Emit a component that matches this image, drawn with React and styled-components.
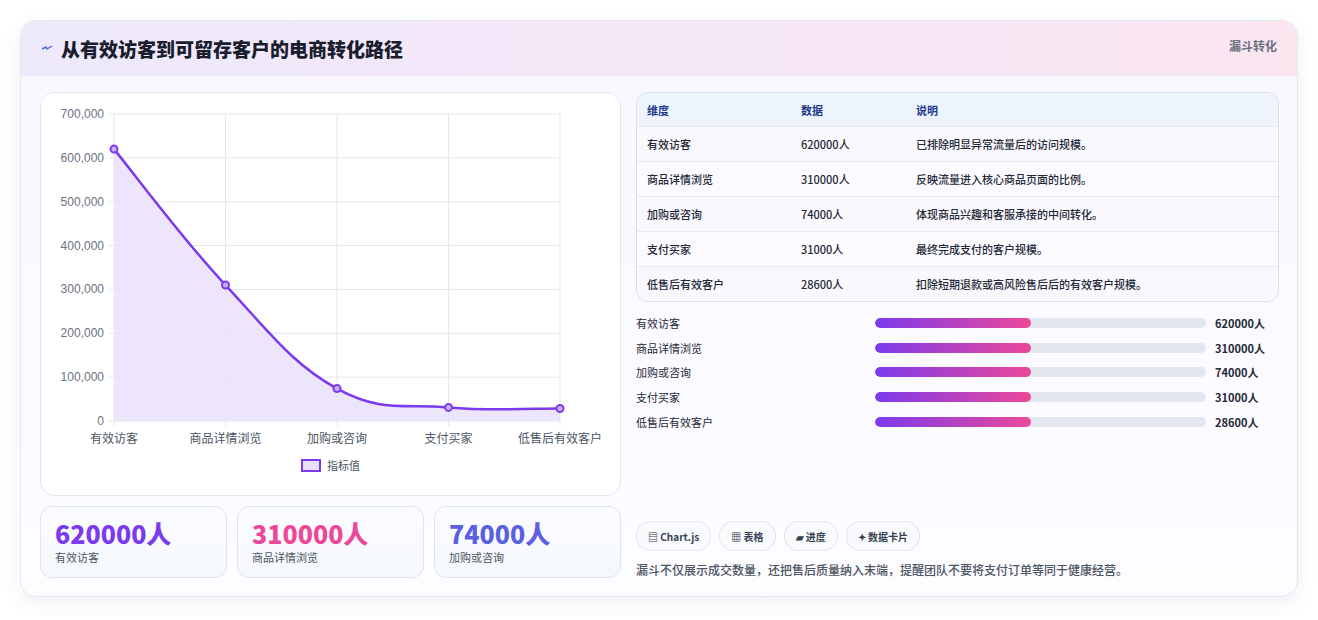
import React from 'react';
import styled, { createGlobalStyle } from 'styled-components';

const Global = createGlobalStyle`
  body { margin: 0; background: #fff; font-family: "Noto Sans CJK SC", "Noto Sans", sans-serif; }
`;

const Page = styled.div`
  padding: 20px 20px 20px 20px;
`;

const Card = styled.div`
  border: 1px solid #e5e7f0;
  border-radius: 16px;
  overflow: hidden;
  background: linear-gradient(180deg, #f8f7ff, #fdfcff);
  box-shadow: 0 6px 20px rgba(60, 60, 120, 0.08);
`;

const Header = styled.div`
  height: 54px;
  display: flex;
  align-items: center;
  justify-content: space-between;
  padding: 0 20px;
  background: linear-gradient(90deg, #ede9fb, #f7e6f5 70%, #fbe6f0);
  border-bottom: 1px solid #ece8f5;
`;

const Title = styled.h1`
  margin: 0;
  font-size: 19px;
  font-weight: 800;
  color: #1a1d2e;
  display: flex;
  align-items: center;
  gap: 8px;
`;

const Tag = styled.span`
  font-size: 12px;
  font-weight: 600;
  color: #6b7280;
  align-self: flex-start;
  margin-top: 16px;
`;

const Body = styled.div`
  display: grid;
  grid-template-columns: 581px 643px;
  gap: 15px;
  padding: 16px 19px 18px 19px;
`;

const Col = styled.div`
  display: flex;
  flex-direction: column;
  gap: ${p => (p.tight ? '0' : '10px')};
`;

const ChartCard = styled.div`
  height: 402px;
  border: 1px solid #e3e6ef;
  border-radius: 14px;
  background: #fff;
  position: relative;
`;

const Stats = styled.div`
  display: grid;
  grid-template-columns: repeat(3, 187px);
  gap: 10px;
`;

const Stat = styled.div`
  height: 72px;
  border: 1px solid #dde5ee;
  border-radius: 12px;
  background: linear-gradient(180deg, #fbfcff, #f5f8fc);
  padding: 10px 14px;
  box-sizing: border-box;
`;

const StatNum = styled.div`
  font-size: 25px;
  font-weight: 800;
  line-height: 32px;
  color: ${p => p.c};
`;

const StatLabel = styled.div`
  font-size: 11px;
  color: #4b5563;
`;

const Table = styled.div`
  border: 1px solid #d9dee8;
  border-radius: 12px;
  overflow: hidden;
  background: #fff;
`;

const Row = styled.div`
  display: grid;
  grid-template-columns: 154px 115px 1fr;
  height: ${p => (p.head ? '32px' : '34px')};
  align-items: center;
  padding-left: 10px;
  font-size: 11px;
  font-weight: ${p => (p.head ? 700 : 500)};
  color: ${p => (p.head ? '#1e3a8a' : '#1f2937')};
  background: ${p => (p.head ? '#eef4fe' : p.alt ? '#fbfaff' : '#f9f8fd')};
  border-top: 1px solid ${p => (p.head ? 'transparent' : '#e7eaf1')};
`;

const Bars = styled.div`
  display: flex;
  flex-direction: column;
  gap: 10.7px;
  margin-top: 13px;
`;

const BarRow = styled.div`
  display: grid;
  grid-template-columns: 239px 340px 1fr;
  align-items: center;
  font-size: 11px;
  color: #1f2937;
  height: 14px;
`;

const Track = styled.div`
  height: 10px;
  border-radius: 5px;
  background: #e3e8f0;
  margin-right: 9px;
  overflow: hidden;
`;

const Fill = styled.div`
  height: 100%;
  border-radius: 5px;
  background: linear-gradient(90deg, #7c3aed, #ec4899);
`;

const Val = styled.span`
  font-weight: 700;
`;

const Chips = styled.div`
  display: flex;
  gap: 8px;
  margin-top: auto;
`;

const Chip = styled.span`
  height: 28px;
  padding: 0 11px;
  border: 1px solid #e2e6ee;
  border-radius: 14px;
  background: #f8fafc;
  font-size: 10px;
  font-weight: 700;
  color: #374151;
  display: flex;
  align-items: center;
  gap: 3px;
`;

const Note = styled.p`
  margin: 10px 0 0;
  font-size: 12px;
  font-weight: 500;
  color: #4b5563;
`;

const Legend = styled.div`
  position: absolute;
  left: 0;
  right: 0;
  top: 364px;
  display: flex;
  justify-content: center;
  align-items: center;
  gap: 6px;
  font-size: 11px;
  color: #4b5563;
`;

const LegendBox = styled.span`
  width: 16px;
  height: 9px;
  border: 2px solid #7c3aed;
  background: #e9e1fb;
`;

const rows = [
  ['有效访客', 620000, '已排除明显异常流量后的访问规模。'],
  ['商品详情浏览', 310000, '反映流量进入核心商品页面的比例。'],
  ['加购或咨询', 74000, '体现商品兴趣和客服承接的中间转化。'],
  ['支付买家', 31000, '最终完成支付的客户规模。'],
  ['低售后有效客户', 28600, '扣除短期退款或高风险售后后的有效客户规模。'],
];

const Chart = () => {
  const x0 = 73, x1 = 519, yb = 328, yt = 21;
  const xs = rows.map((_, i) => x0 + (i * (x1 - x0)) / 4);
  const ys = rows.map(r => yb - (r[1] / 700000) * (yb - yt));
  const pts = xs.map((x, i) => [x, ys[i]]);
  let d = `M${pts[0][0]},${pts[0][1]}`;
  for (let i = 0; i < pts.length - 1; i++) {
    const p0 = pts[i - 1] || pts[i], p1 = pts[i], p2 = pts[i + 1], p3 = pts[i + 2] || p2;
    const t = 0.2;
    const c1y = p1[1] + (p2[1] - p0[1]) * t, c2y = p2[1] - (p3[1] - p1[1]) * t;
    d += ` C${p1[0] + (p2[0] - p0[0]) * t},${c1y} ${p2[0] - (p3[0] - p1[0]) * t},${c2y} ${p2[0]},${p2[1]}`;
  }
  const ticks = [0, 1, 2, 3, 4, 5, 6, 7];
  return (
    <svg width="580" height="360" style={{ position: 'absolute', left: 0, top: 0 }}>
      {ticks.map(t => {
        const y = yb - (t / 7) * (yb - yt);
        return (
          <g key={t}>
            <line x1={x0 - 5} x2={x1} y1={y} y2={y} stroke="#e5e7eb" />
            <text x={x0 - 10} y={y + 4} textAnchor="end" fontSize="12" fill="#6b7280" fontFamily="Liberation Sans, sans-serif">
              {t === 0 ? '0' : `${t}00,000`}
            </text>
          </g>
        );
      })}
      {xs.map((x, i) => (
        <g key={i}>
          <line x1={x} x2={x} y1={yt} y2={yb + 5} stroke="#e5e7eb" />
          <text x={x} y={yb + 22} textAnchor="middle" fontSize="12" fill="#4b5563">{rows[i][0]}</text>
        </g>
      ))}
      <path d={`${d} L${x1},${yb} L${x0},${yb} Z`} fill="#e9e1fa" opacity="0.85" />
      <path d={d} fill="none" stroke="#7c3aed" strokeWidth="2.5" />
      {pts.map((p, i) => (
        <circle key={i} cx={p[0]} cy={p[1]} r="3.5" fill="#c4b0f5" stroke="#7c3aed" strokeWidth="2" />
      ))}
    </svg>
  );
};

export default function App() {
  return (
    <Page>
      <Global />
      <Card>
        <Header>
          <Title>
            <svg width="12" height="12" viewBox="0 0 12 12"><path d="M1 7 L5 5 L6 7 L11 4" stroke="#4f6bd8" strokeWidth="1.4" fill="none" /></svg>
            从有效访客到可留存客户的电商转化路径
          </Title>
          <Tag>漏斗转化</Tag>
        </Header>
        <Body>
          <Col>
            <ChartCard>
              <Chart />
              <Legend><LegendBox />指标值</Legend>
            </ChartCard>
            <Stats>
              <Stat><StatNum c="#7c3aed">620000人</StatNum><StatLabel>有效访客</StatLabel></Stat>
              <Stat><StatNum c="#ec4899">310000人</StatNum><StatLabel>商品详情浏览</StatLabel></Stat>
              <Stat><StatNum c="#5b5fe0">74000人</StatNum><StatLabel>加购或咨询</StatLabel></Stat>
            </Stats>
          </Col>
          <Col tight>
            <Table>
              <Row head><span>维度</span><span>数据</span><span>说明</span></Row>
              {rows.map((r, i) => (
                <Row key={r[0]} alt={i % 2 === 1}><span>{r[0]}</span><span>{r[1]}人</span><span>{r[2]}</span></Row>
              ))}
            </Table>
            <Bars>
              {rows.map(r => (
                <BarRow key={r[0]}>
                  <span>{r[0]}</span>
                  <Track><Fill style={{ width: '47%' }} /></Track>
                  <Val>{r[1]}人</Val>
                </BarRow>
              ))}
            </Bars>
            <Chips>
              <Chip>▤ Chart.js</Chip>
              <Chip>▦ 表格</Chip>
              <Chip>▰ 进度</Chip>
              <Chip>✦ 数据卡片</Chip>
            </Chips>
            <Note>漏斗不仅展示成交数量，还把售后质量纳入末端，提醒团队不要将支付订单等同于健康经营。</Note>
          </Col>
        </Body>
      </Card>
    </Page>
  );
}
